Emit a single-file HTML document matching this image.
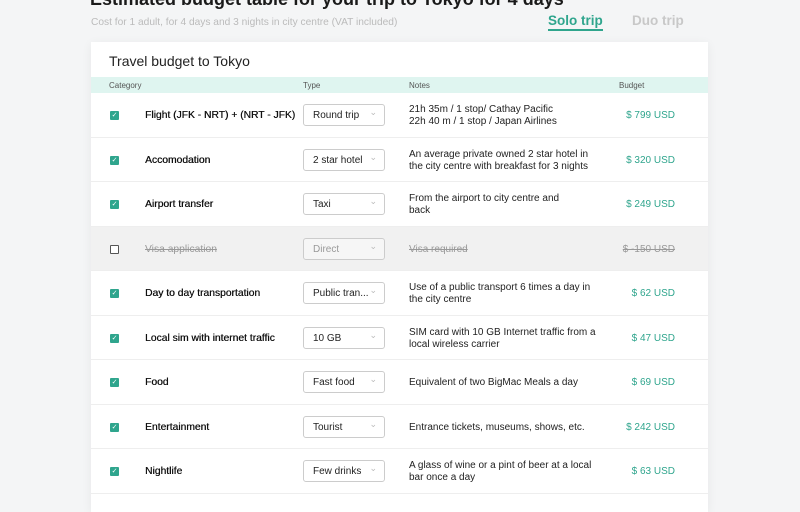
<!DOCTYPE html>
<html><head><style>
*{margin:0;padding:0;box-sizing:border-box}
body{width:800px;height:500px;overflow:hidden;background:#f4f5f6;font-family:"Liberation Sans",sans-serif;color:#222;position:relative}
.h1{position:absolute;left:90px;top:-11px;font-size:18px;font-weight:bold;color:#1a1a1a;white-space:nowrap}
.sub{position:absolute;left:91px;top:17px;font-size:10.2px;color:#bbb}
.solo{position:absolute;left:548px;top:13px;font-size:13.5px;color:#2fa58d;font-weight:bold;border-bottom:2px solid #2fa58d;padding-bottom:1px}
.duo{position:absolute;left:632px;top:13px;font-size:13.5px;color:#c8c8c8;font-weight:bold}
.card{position:absolute;left:91px;top:42px;width:617px;height:470px;background:#fff;box-shadow:0 2px 10px rgba(0,0,0,.06)}
.ct{position:absolute;left:18px;top:11px;font-size:14px;color:#222}
.hd{position:absolute;left:0;top:35px;width:617px;height:16px;background:#dff5f0;font-size:8px;color:#555}
.hd span{position:absolute;top:4px}
.row{position:absolute;left:0;width:617px;height:44.5px;border-bottom:1px solid #eee;font-size:10px}
.row.dis{background:#f1f1f1;color:#999}
.cb{position:absolute;left:19px;top:18px;width:9px;height:9px;background:#2fa58d;border-radius:1px;color:#fff;font-size:7px;line-height:9px;text-align:center}
.cb.off{background:#fff;border:1px solid #555}
.cat{position:absolute;left:54px;top:17px;font-size:10.3px;color:#111;text-shadow:0.3px 0 0 #111}
.sel{position:absolute;left:212px;top:11px;width:82px;height:22px;border:1px solid #ccc;border-radius:3px;padding:5px 9px;font-size:10px}
.sel:after{content:"⌄";position:absolute;right:7px;top:2px;color:#bbb;font-size:9px}
.note{position:absolute;left:318px;top:11px;width:192px;line-height:12px}
.note.one{top:17px}
.bud{position:absolute;right:33px;top:17px;color:#2fa58d}
.dis .cat,.dis .note,.dis .bud{text-decoration:line-through;color:#999;text-shadow:none}
.dis .sel{color:#999;background:#f6f6f6}
</style></head><body>
<div class="h1">Estimated budget table for your trip to Tokyo for 4 days</div>
<div class="sub">Cost for 1 adult, for 4 days and 3 nights in city centre (VAT included)</div>
<div class="solo">Solo trip</div><div class="duo">Duo trip</div>
<div class="card">
<div class="ct">Travel budget to Tokyo</div>
<div class="hd"><span style="left:18px">Category</span><span style="left:212px">Type</span><span style="left:318px">Notes</span><span style="left:528px">Budget</span></div>
<div class="row" style="top:51px"><div class="cb">✓</div><div class="cat">Flight (JFK - NRT) + (NRT - JFK)</div><div class="sel">Round trip</div><div class="note">21h 35m / 1 stop/ Cathay Pacific<br>22h 40 m / 1 stop / Japan Airlines</div><div class="bud">$ 799 USD</div></div>
<div class="row" style="top:95.5px"><div class="cb">✓</div><div class="cat">Accomodation</div><div class="sel">2 star hotel</div><div class="note">An average private owned 2 star hotel in the city centre with breakfast for 3 nights</div><div class="bud">$ 320 USD</div></div>
<div class="row" style="top:140px"><div class="cb">✓</div><div class="cat">Airport transfer</div><div class="sel">Taxi</div><div class="note">From the airport to city centre and<br>back</div><div class="bud">$ 249 USD</div></div>
<div class="row dis" style="top:184.5px"><div class="cb off"></div><div class="cat">Visa application</div><div class="sel">Direct</div><div class="note one">Visa required</div><div class="bud">$ -150 USD</div></div>
<div class="row" style="top:229px"><div class="cb">✓</div><div class="cat">Day to day transportation</div><div class="sel">Public tran...</div><div class="note">Use of a public transport 6 times a day in the city centre</div><div class="bud">$ 62 USD</div></div>
<div class="row" style="top:273.5px"><div class="cb">✓</div><div class="cat">Local sim with internet traffic</div><div class="sel">10 GB</div><div class="note">SIM card with 10 GB Internet traffic from a local wireless carrier</div><div class="bud">$ 47 USD</div></div>
<div class="row" style="top:318px"><div class="cb">✓</div><div class="cat">Food</div><div class="sel">Fast food</div><div class="note one">Equivalent of two BigMac Meals a day</div><div class="bud">$ 69 USD</div></div>
<div class="row" style="top:362.5px"><div class="cb">✓</div><div class="cat">Entertainment</div><div class="sel">Tourist</div><div class="note one">Entrance tickets, museums, shows, etc.</div><div class="bud">$ 242 USD</div></div>
<div class="row" style="top:407px"><div class="cb">✓</div><div class="cat">Nightlife</div><div class="sel">Few drinks</div><div class="note">A glass of wine or a pint of beer at a local bar once a day</div><div class="bud">$ 63 USD</div></div>
</div>
</body></html>
